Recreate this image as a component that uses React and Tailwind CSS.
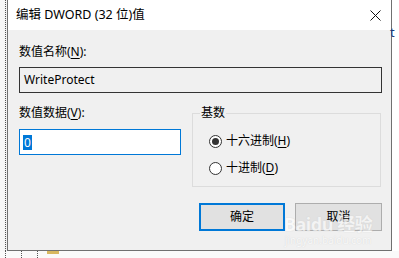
const font = { fontFamily: '"Noto Sans", "Noto Sans CJK SC", sans-serif' }

function Radio({ checked, children }) {
  return (
    <label className="flex items-center h-4 gap-[4px]">
      <span className="w-[13px] h-[13px] rounded-full border border-[#333333] bg-white flex items-center justify-center">
        {checked && <span className="w-[7px] h-[7px] rounded-full bg-[#333333]" />}
      </span>
      <span>{children}</span>
    </label>
  )
}

function CloseIcon() {
  return (
    <svg width="11" height="11" viewBox="0 0 11 11" fill="none" stroke="#111" strokeWidth="1">
      <path d="M0.5 0.5 L10.5 10.5 M10.5 0.5 L0.5 10.5" />
    </svg>
  )
}

export default function App() {
  return (
    <div
      className="relative w-[399px] h-[258px] overflow-hidden bg-white text-[12px] leading-4 text-black flex flex-col"
      style={font}
    >
      <div className="flex h-[251px]">
        {/* background on the left */}
        <div className="w-[7px] bg-[#f7f7f7] flex justify-end pr-[1px]">
          <div className="w-px border-l border-dotted border-[#555]" />
        </div>

        {/* dialog */}
        <div className="w-[385px] flex flex-col border-l border-r border-b border-[#707070] shadow-[2px_2px_6px_rgba(0,0,0,0.15)]">
          <div className="h-[30px] bg-white flex items-center pl-[8px] pr-[10px]">
            <span className="text-[12.5px]">编辑 DWORD (32 位)值</span>
            <div className="ml-auto flex items-center">
              <CloseIcon />
            </div>
          </div>

          <div className="flex-1 bg-[#f0f0f0] pl-[11px] pr-[9px] pt-[14px]">
            <div className="h-4">
              数值名称(<u className="underline-offset-2">N</u>):
            </div>
            <div className="mt-[7px] h-[26px] border border-[#333333] bg-[#f0f0f0] flex items-center pl-[4px]">
              WriteProtect
            </div>

            <div className="mt-[12px] flex items-start">
              <div className="w-[162px]">
                <div className="h-4">
                  数值数据(<u className="underline-offset-2">V</u>):
                </div>
                <div className="mt-[8px] h-[26px] border border-[#0078d7] bg-white flex items-center pl-[3px]">
                  <span className="bg-[#0078d7] text-white h-[15px] leading-[15px] px-[1px]">0</span>
                </div>
              </div>

              <fieldset className="ml-[11px] w-[189px] border border-[#dcdcdc] pl-[16px] pt-[12px] pb-[10px]">
                <legend className="ml-[-9px] px-[1px] leading-4">基数</legend>
                <div className="flex flex-col gap-[11px]">
                  <Radio checked>
                    十六进制(<u className="underline-offset-2">H</u>)
                  </Radio>
                  <Radio>
                    十进制(<u className="underline-offset-2">D</u>)
                  </Radio>
                </div>
              </fieldset>
            </div>

            <div className="mt-[16px] flex justify-end gap-[10px]">
              <button className="w-[86px] h-[28px] border-2 border-[#0078d7] bg-[#e1e1e1]">确定</button>
              <button className="w-[87px] h-[28px] border border-[#adadad] bg-[#e1e1e1]">取消</button>
            </div>
          </div>
        </div>

        {/* background on the right */}
        <div className="flex-1 bg-white pt-[24px]">
          <span className="text-[#1e3a78] text-[13px] -ml-[2px]">t</span>
        </div>
      </div>

      {/* background below */}
      <div className="flex-1 bg-[#fafafa] flex items-stretch">
        <div className="ml-[5px] w-px border-l border-dotted border-[#555]" />
        <div className="ml-[15px] w-px border-l border-dotted border-[#555]" />
        <div className="ml-[15px] w-px border-l border-dotted border-[#555]" />
        <div className="ml-[9px] w-[12px] h-[3px] bg-[#d8b860]" />
      </div>

      {/* faint watermark over the buttons */}
      <div className="absolute left-[284px] top-[214px] flex flex-col items-center text-white opacity-60 pointer-events-none [text-shadow:0_0_1px_#bbb]">
        <span className="text-[18px] leading-[20px] font-bold tracking-tight">Baidu 经验</span>
        <span className="text-[10px] leading-[12px]">jingyan.baidu.com</span>
      </div>
    </div>
  )
}
